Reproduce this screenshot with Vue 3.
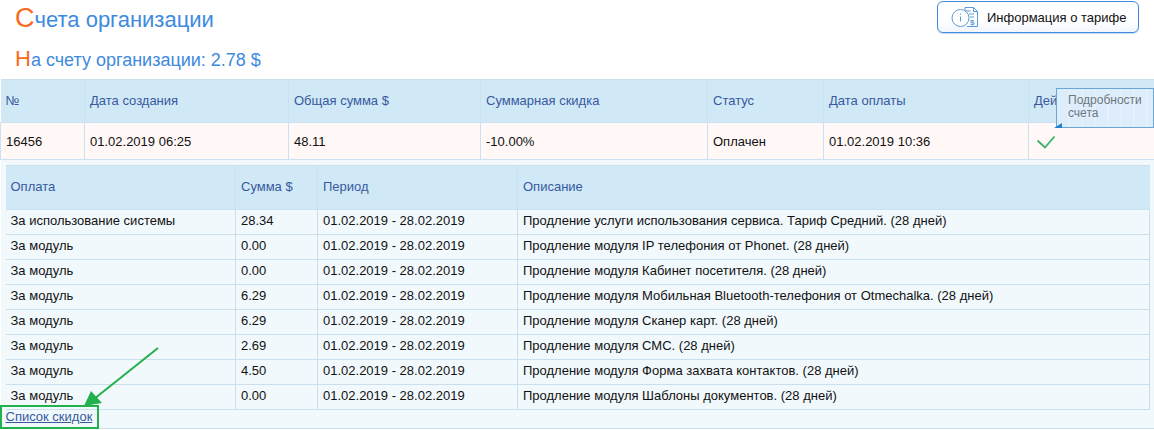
<script setup>
const mainHead = ['№', 'Дата создания', 'Общая сумма $', 'Суммарная скидка', 'Статус', 'Дата оплаты', 'Действия']
const mainRow = ['16456', '01.02.2019 06:25', '48.11', '-10.00%', 'Оплачен', '01.02.2019 10:36']
const mainWidths = [84, 204, 192, 227, 116, 205, 126]
const subHead = ['Оплата', 'Сумма $', 'Период', 'Описание']
const subWidths = [230, 82, 200, 632]
const period = '01.02.2019 - 28.02.2019'
const rows = [
  ['За использование системы', '28.34', 'Продление услуги использования сервиса. Тариф Средний. (28 дней)'],
  ['За модуль', '0.00', 'Продление модуля IP телефония от Phonet. (28 дней)'],
  ['За модуль', '0.00', 'Продление модуля Кабинет посетителя. (28 дней)'],
  ['За модуль', '6.29', 'Продление модуля Мобильная Bluetooth-телефония от Otmechalka. (28 дней)'],
  ['За модуль', '6.29', 'Продление модуля Сканер карт. (28 дней)'],
  ['За модуль', '2.69', 'Продление модуля СМС. (28 дней)'],
  ['За модуль', '4.50', 'Продление модуля Форма захвата контактов. (28 дней)'],
  ['За модуль', '0.00', 'Продление модуля Шаблоны документов. (28 дней)']
]
</script>

<template>
  <div class="page">
    <header class="top">
      <div class="titles">
        <h1 class="title"><span class="cap">С</span>чета организации</h1>
        <h2 class="balance"><span class="cap2">Н</span>а счету организации: 2.78 $</h2>
      </div>
      <button class="tariff" type="button">
        <svg class="tariff-icon" width="28" height="24" viewBox="0 0 28 24" fill="none" stroke="#5b9bd5" stroke-width="1">
          <circle cx="9.5" cy="13" r="8.5" fill="#fff" />
          <path d="M9.5 11.5v5M9.5 8.5v1.2" />
          <path d="M14 5.5V2.5h8.5l4 4v15H16" />
          <path d="M22.5 2.5v4h4M14.5 6h5M18 9h5M19 12h4" />
          <text x="19" y="20" class="dollar">$</text>
        </svg>
        <span>Информация о тарифе</span>
      </button>
    </header>

    <div class="table-wrap">
      <table class="main">
        <colgroup><col v-for="w in mainWidths" :key="w" :style="{ width: w + 'px' }" /></colgroup>
        <thead>
          <tr><th v-for="h in mainHead" :key="h">{{ h }}</th></tr>
        </thead>
        <tbody>
          <tr class="invoice">
            <td v-for="c in mainRow" :key="c">{{ c }}</td>
            <td>
              <svg class="check" width="20" height="14" viewBox="0 0 20 14" fill="none">
                <path d="M1.5 5.5 9 12.5 18.5 1.5" stroke="#3cb165" stroke-width="1.8" />
              </svg>
            </td>
          </tr>
          <tr class="detail">
            <td colspan="7" class="detail-cell">
              <table class="sub">
                <colgroup><col v-for="w in subWidths" :key="w" :style="{ width: w + 'px' }" /></colgroup>
                <thead>
                  <tr><th v-for="h in subHead" :key="h">{{ h }}</th></tr>
                </thead>
                <tbody>
                  <tr v-for="(r, i) in rows" :key="i">
                    <td>{{ r[0] }}</td>
                    <td>{{ r[1] }}</td>
                    <td>{{ period }}</td>
                    <td>{{ r[2] }}</td>
                  </tr>
                </tbody>
              </table>
              <a class="discounts" href="#">Список скидок</a>
            </td>
          </tr>
        </tbody>
      </table>

      <div class="tip">Подробности<br />счета<i class="tip-tail"></i></div>
    </div>

    <svg class="annotation" width="170" height="100" viewBox="0 0 170 100" fill="none">
      <path d="M158 18 94 69" stroke="#22b14c" stroke-width="2" />
      <path d="M84 76 91 61 102 73Z" fill="#22b14c" />
      <rect x="1" y="76" width="97" height="22" stroke="#22b14c" stroke-width="2" />
    </svg>
  </div>
</template>

<style scoped>
.page {
  position: relative;
  width: 1154px;
  height: 430px;
  overflow: hidden;
  background: #fff;
  font-family: "Liberation Sans", Arial, sans-serif;
  font-size: 13px;
  color: #111;
}
.top {
  display: flex;
  justify-content: space-between;
  align-items: flex-start;
  height: 79px;
  padding: 1px 15px 0;
  box-sizing: border-box;
}
.title {
  margin: 0;
  height: 40px;
  font-weight: 400;
  font-size: 22px;
  line-height: 34px;
  color: #3d8ade;
}
.balance {
  margin: 0;
  font-weight: 400;
  font-size: 18px;
  line-height: 36px;
  color: #3d8ade;
}
.cap { font-size: 27px; color: #f96a1e; }
.cap2 { font-size: 22px; color: #f96a1e; }
.tariff {
  display: flex;
  align-items: center;
  gap: 8px;
  width: 202px;
  height: 32px;
  padding: 0 0 0 13px;
  box-sizing: border-box;
  border: 1px solid #3d8ade;
  border-radius: 6px;
  background: linear-gradient(#fff 60%, #f1f6fc);
  box-shadow: 0 1px 1px #c5d9ef;
  font: 13px "Liberation Sans", Arial, sans-serif;
  color: #111;
}
.tariff-icon { flex: none; }
.dollar { font: bold 8px "Liberation Sans", Arial, sans-serif; fill: #5b9bd5; stroke: none; }
.table-wrap { position: relative; }
table { border-collapse: collapse; table-layout: fixed; }
.main { width: 1154px; }
.main > thead th {
  height: 43px;
  padding: 0 5px 1px;
  box-sizing: border-box;
  background: #d1e8f7;
  border: 1px solid #c9e1f1;
  border-left-color: #dbecf8;
  font-weight: 400;
  text-align: left;
  color: #375a9e;
}
.main > tbody > .invoice > td {
  height: 37px;
  padding: 0 5px;
  box-sizing: border-box;
  background: #fff8f7;
  border: 1px solid #c9e1f1;
}
.main th:first-child, .main td:first-child { border-left: 0; }
.main th:last-child, .main .invoice td:last-child { border-right: 0; }
.check { display: block; margin: 2px 0 0 2px; }
.main > tbody > .detail > .detail-cell {
  height: 269px;
  padding: 5px 5px 0;
  box-sizing: border-box;
  vertical-align: top;
  background: #f2f9fd;
  border-bottom: 1px solid #c9e1f1;
}
.sub { width: 1144px; }
.sub th {
  height: 44px;
  padding: 0 4px 2px 5px;
  box-sizing: border-box;
  background: #d1e8f7;
  border: 1px solid #c9e1f1;
  font-weight: 400;
  text-align: left;
  color: #375a9e;
}
.sub td {
  height: 25px;
  padding: 0 4px 4px 5px;
  box-sizing: border-box;
  border: 1px solid #c9dfee;
  background: #f2f9fd;
}
.discounts {
  display: block;
  line-height: 14px;
  color: #375a9e;
  text-decoration: underline;
}
.tip {
  position: absolute;
  left: 1056px;
  top: 9px;
  width: 98px;
  height: 40px;
  padding: 5px 0 0 11px;
  box-sizing: border-box;
  background: repeating-linear-gradient(90deg, #deedfb 0 11px, #e4f0fc 11px 13px);
  border: 1px solid #6aa7d8;
  font-size: 12px;
  line-height: 13px;
  color: #6d7780;
}
.tip-tail {
  position: absolute;
  left: -3px;
  bottom: -1px;
  width: 0;
  height: 0;
  border-style: solid;
  border-width: 0 0 5px 8px;
  border-color: transparent transparent #1f7fd1 transparent;
}
.annotation {
  position: absolute;
  left: 0;
  top: 330px;
  pointer-events: none;
}
</style>
